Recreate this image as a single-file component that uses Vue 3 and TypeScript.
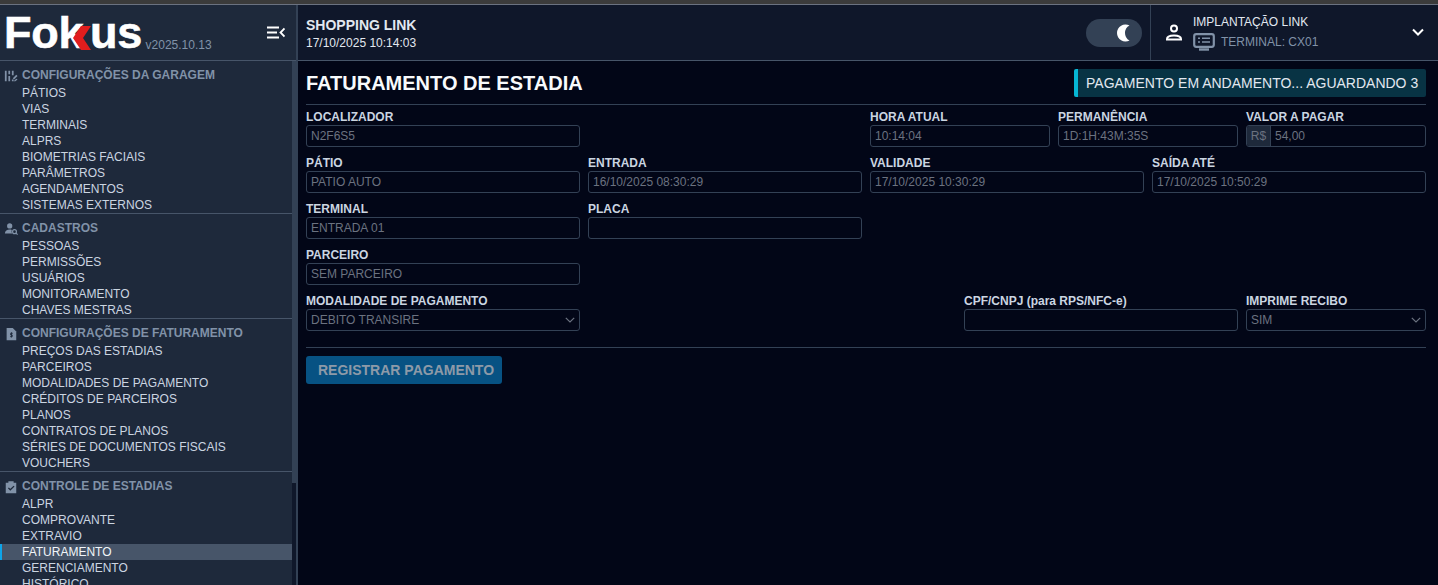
<script setup lang="ts">
const groups = [
  { title: 'CONFIGURAÇÕES DA GARAGEM', icon: 'garage', items: ['PÁTIOS', 'VIAS', 'TERMINAIS', 'ALPRS', 'BIOMETRIAS FACIAIS', 'PARÂMETROS', 'AGENDAMENTOS', 'SISTEMAS EXTERNOS'] },
  { title: 'CADASTROS', icon: 'people', items: ['PESSOAS', 'PERMISSÕES', 'USUÁRIOS', 'MONITORAMENTO', 'CHAVES MESTRAS'] },
  { title: 'CONFIGURAÇÕES DE FATURAMENTO', icon: 'bill', items: ['PREÇOS DAS ESTADIAS', 'PARCEIROS', 'MODALIDADES DE PAGAMENTO', 'CRÉDITOS DE PARCEIROS', 'PLANOS', 'CONTRATOS DE PLANOS', 'SÉRIES DE DOCUMENTOS FISCAIS', 'VOUCHERS'] },
  { title: 'CONTROLE DE ESTADIAS', icon: 'check', items: ['ALPR', 'COMPROVANTE', 'EXTRAVIO', 'FATURAMENTO', 'GERENCIAMENTO', 'HISTÓRICO'] },
]
</script>

<template>
  <div class="page">
    <div class="strip"></div>
    <div class="shell">
      <aside class="sidebar">
        <div class="brand">
          <div class="logo"><span>Fok</span><svg class="chev" viewBox="0 0 22 24" width="22" height="24"><path d="M10 0h10L12 12l8 12H10L2 12z" fill="#e11d1d" /></svg><span>us</span></div>
          <span class="version">v2025.10.13</span>
          <svg class="burger" viewBox="0 0 18 13" width="18" height="13" fill="none" stroke="#fff" stroke-width="2"><path d="M0 1.500h12M0 6.500h10M0 11.500h12" /><path d="M17.500 2.500 13.500 6.500l4 4" stroke-width="1.800" /></svg>
        </div>
        <div class="nav-wrap">
          <nav class="nav">
            <section v-for="g in groups" :key="g.title" class="group">
              <h3 class="group-title">
                <svg class="gicon" viewBox="0 0 16 16" width="14" height="14" fill="#8192a8">
                  <template v-if="g.icon === 'garage'">
                    <path d="M1 2h2v12H1zM5 2h2v4H5zM5 8h2v6H5zM9 2h2v5H9zM9 12h2v2H9z" /><path d="M10 10.500l4-4 1.500 1.500-4 4zM14 11l1.500 1-2.500 2h-2z" />
                  </template>
                  <template v-else-if="g.icon === 'people'">
                    <circle cx="6.500" cy="4.500" r="3" /><path d="M1 13c0-3 2.500-4.500 5.500-4.500 1 0 1.800.2 2.500.5-.6 1.200-.4 2.800.5 4z" /><circle cx="12" cy="11" r="2.200" fill="none" stroke="#8192a8" stroke-width="1.400" /><path d="M13.500 12.500 15.500 14.500" stroke="#8192a8" stroke-width="1.400" />
                  </template>
                  <template v-else-if="g.icon === 'bill'">
                    <path d="M3 1h7l4 4v10H3z" /><path d="M8.500 6v6M10 7.200H7.600v1.900h1.800V11H7" stroke="#1e293b" stroke-width="1" fill="none" />
                  </template>
                  <template v-else>
                    <path d="M2 3h3V1.500h6V3h3v12H2z" /><path d="M5 9l2.200 2.200L11.500 7" stroke="#1e293b" stroke-width="1.500" fill="none" />
                  </template>
                </svg>
                {{ g.title }}
              </h3>
              <a v-for="i in g.items" :key="i" class="item" :class="{ active: i === 'FATURAMENTO' }">{{ i }}</a>
            </section>
          </nav>
          <div class="scroll-track"><div class="scroll-thumb"></div></div>
        </div>
      </aside>

      <div class="right">
        <header class="topbar">
          <div class="place">
            <strong>SHOPPING LINK</strong>
            <span>17/10/2025 10:14:03</span>
          </div>
          <div class="toggle">
            <svg viewBox="0 0 16 18" width="16" height="18"><path d="M13.500 1.500A8.500 8.500 0 1 0 13.500 16.500 8.500 8.500 0 0 1 13.500 1.500Z" fill="#fff" /></svg>
          </div>
          <div class="account">
            <svg class="person" viewBox="0 0 18 17" width="18" height="17" fill="none" stroke="#fff" stroke-width="2"><circle cx="9" cy="4.500" r="3" /><path d="M2 15.500v-.5c0-2.500 3.500-3.500 7-3.500s7 1 7 3.500v.5z" /></svg>
            <div class="acc-text">
              <span class="acc-name">IMPLANTAÇÃO LINK</span>
              <span class="acc-term">
                <svg viewBox="0 0 22 18" width="22" height="18" fill="none" stroke="#8192a8" stroke-width="2.200"><rect x="1.200" y="1.200" width="19.600" height="12.600" rx="2" /><path d="M5 5.200h2M9 5.200h8M5 9h2M9 9h8" stroke-width="1.600" /><path d="M6 16.500h10" stroke-width="2.400" /></svg>
                TERMINAL: CX01
              </span>
            </div>
            <svg class="acc-chev" viewBox="0 0 14 9" width="14" height="9" fill="none" stroke="#fff" stroke-width="2"><path d="M2 1.500 7 6.500l5-5" /></svg>
          </div>
        </header>

        <main class="content">
          <div class="title-row">
            <h1>FATURAMENTO DE ESTADIA</h1>
            <div class="alert">PAGAMENTO EM ANDAMENTO... AGUARDANDO 3</div>
          </div>
          <form class="form" @submit.prevent>
            <div class="grid">
              <label class="field"><span>LOCALIZADOR</span><input readonly value="N2F6S5" /></label>
              <div></div>
              <div class="triple">
                <label class="field"><span>HORA ATUAL</span><input readonly value="10:14:04" /></label>
                <label class="field"><span>PERMANÊNCIA</span><input readonly value="1D:1H:43M:35S" /></label>
                <label class="field"><span>VALOR A PAGAR</span>
                  <div class="money"><b>R$</b><input readonly value="54,00" /></div>
                </label>
              </div>

              <label class="field"><span>PÁTIO</span><input readonly value="PATIO AUTO" /></label>
              <label class="field"><span>ENTRADA</span><input readonly value="16/10/2025 08:30:29" /></label>
              <label class="field"><span>VALIDADE</span><input readonly value="17/10/2025 10:30:29" /></label>
              <label class="field"><span>SAÍDA ATÉ</span><input readonly value="17/10/2025 10:50:29" /></label>

              <label class="field"><span>TERMINAL</span><input readonly value="ENTRADA 01" /></label>
              <label class="field"><span>PLACA</span><input readonly value="" /></label>
              <div class="wide"></div>

              <label class="field"><span>PARCEIRO</span><input readonly value="SEM PARCEIRO" /></label>
              <div class="rest"></div>

              <label class="field"><span>MODALIDADE DE PAGAMENTO</span>
                <div class="select"><span class="sel-val">DEBITO TRANSIRE</span><svg viewBox="0 0 10 6" width="10" height="6" fill="none" stroke="#6b7280" stroke-width="1.200"><path d="M.8.800 5 5l4.200-4.200" /></svg></div>
              </label>
              <div class="pay-right">
                <label class="field cpf"><span>CPF/CNPJ (para RPS/NFC-e)</span><input readonly value="" /></label>
                <label class="field rec"><span>IMPRIME RECIBO</span>
                  <div class="select"><span class="sel-val">SIM</span><svg viewBox="0 0 10 6" width="10" height="6" fill="none" stroke="#6b7280" stroke-width="1.200"><path d="M.8.800 5 5l4.200-4.200" /></svg></div>
                </label>
              </div>
            </div>
            <hr class="sep" />
            <button class="submit" type="button" disabled>REGISTRAR PAGAMENTO</button>
          </form>
        </main>
      </div>
    </div>
  </div>
</template>

<style scoped>
.page {
  height: 585px;
  display: flex;
  flex-direction: column;
  overflow: hidden;
  font-family: "Liberation Sans", Arial, sans-serif;
  background: #020617;
  color: #e2e8f0;
}
.strip {
  height: 4px;
  flex: none;
  background: #3b3b3b;
  border-bottom: 1px solid #6b7280;
}
.shell { flex: 1; display: flex; min-height: 0; }
.sidebar {
  width: 296px;
  flex: none;
  display: flex;
  flex-direction: column;
  background: #1e293b;
  border-right: 2px solid #334155;
  min-height: 0;
}
.brand {
  height: 56px;
  flex: none;
  box-sizing: border-box;
  border-bottom: 1px solid #475569;
  display: flex;
  align-items: flex-start;
  position: relative;
  padding-left: 4px;
}
.logo {
  display: flex;
  align-items: flex-end;
  height: 36px;
  margin-top: 10px;
  color: #fff;
  font-weight: 700;
  font-size: 45px;
  line-height: 36px;
  letter-spacing: -0.3px;
  -webkit-text-stroke: 0.6px #fff;
}
.chev { margin: 0 -3px 1px -12px; flex: none; position: relative; }
.version { margin: 34px 0 0 3.5px; font-size: 12px; line-height: 12px; color: #8192a8; }
.burger { position: absolute; right: 11px; top: 21px; }
.nav-wrap { flex: 1; min-height: 0; position: relative; }
.nav { height: 100%; overflow: hidden; margin-right: 4px; }
.scroll-track { position: absolute; top: 0; right: 0; bottom: 0; width: 4px; background: #0f172a; }
.scroll-thumb { height: 422px; background: #334155; }
.group { padding-top: 1px; border-bottom: 1px solid #475569; }
.group:last-child { border-bottom: 0; }
.group-title {
  margin: 0;
  height: 23px;
  padding: 6px 0 0 22px;
  box-sizing: border-box;
  position: relative;
  font-size: 12px;
  line-height: 14px;
  font-weight: 700;
  color: #8192a8;
}
.gicon { position: absolute; left: 4px; top: 7px; }
.item {
  display: block;
  height: 16px;
  line-height: 16px;
  font-size: 12px;
  padding-left: 22px;
  color: #cbd5e1;
}
.item.active {
  background: #475569;
  color: #f1f5f9;
  box-shadow: inset 2px 0 0 #0ea5e9;
}
.right { flex: 1; min-width: 0; display: flex; flex-direction: column; }
.topbar {
  height: 56px;
  flex: none;
  box-sizing: border-box;
  background: #0f172a;
  border-bottom: 1px solid #475569;
  display: flex;
  align-items: center;
}
.place { flex: 1; padding-left: 8px; display: flex; flex-direction: column; }
.place strong { font-size: 14px; line-height: 18px; margin: 1px 0; }
.place span { font-size: 12px; line-height: 16px; }
.toggle {
  width: 56px;
  height: 28px;
  border-radius: 14px;
  background: #334155;
  margin-right: 8px;
  display: flex;
  align-items: center;
  justify-content: flex-end;
  padding-right: 10px;
  box-sizing: border-box;
}
.account {
  width: 288px;
  height: 100%;
  box-sizing: border-box;
  border-left: 1px solid #334155;
  display: flex;
  align-items: center;
  padding-left: 14px;
  position: relative;
}
.person { flex: none; margin-right: 10px; }
.acc-text { display: flex; flex-direction: column; margin-top: 2px; }
.acc-name { font-size: 12px; line-height: 14px; color: #e2e8f0; }
.acc-term { font-size: 12px; display: flex; align-items: center; gap: 6px; color: #8192a8; height: 20px; margin-top: 3px; }
.acc-chev { position: absolute; right: 13px; top: 23px; }
.content { flex: 1; padding: 0 12px 0 8px; }
.title-row {
  height: 44px;
  box-sizing: border-box;
  border-bottom: 1px solid #334155;
  display: flex;
  align-items: flex-start;
  justify-content: space-between;
  padding-top: 8px;
}
h1 { margin: 0; font-size: 20px; line-height: 28px; color: #f8fafc; font-weight: 700; }
.alert {
  height: 28px;
  box-sizing: border-box;
  width: 352px;
  background: #083344;
  border-left: 4px solid #06b6d4;
  border-radius: 2px;
  padding-left: 8px;
  font-size: 14px;
  line-height: 28px;
  color: #e2e8f0;
  white-space: nowrap;
}
.form { padding-top: 4px; }
.grid { display: grid; grid-template-columns: repeat(4, 274px); column-gap: 8px; row-gap: 8px; }
.triple { grid-column: 3 / 5; display: grid; grid-template-columns: repeat(3, 180px); column-gap: 8px; }
.wide { grid-column: 3 / 5; }
.rest { grid-column: 2 / 5; }
.pay-right { grid-column: 2 / 5; display: flex; justify-content: flex-end; gap: 8px; }
.cpf { width: 274px; }
.rec { width: 180px; }
.field { display: flex; flex-direction: column; min-width: 0; }
.field > span {
  height: 16px;
  line-height: 16px;
  font-size: 12px;
  font-weight: 700;
  color: #cbd5e1;
}
input, .select, .money {
  height: 22px;
  box-sizing: border-box;
  width: 100%;
  background: transparent;
  border: 1px solid #334155;
  border-radius: 3px;
  padding: 0 4px;
  font: 12px "Liberation Sans", Arial, sans-serif;
  color: #6b7280;
  outline: none;
}
.select { display: flex; align-items: center; justify-content: space-between; padding-right: 4px; }
.sel-val { font-size: 12px; color: #6b7280; }
.money { display: flex; padding: 0; overflow: hidden; }
.money b {
  flex: none;
  width: 23px;
  background: #1e293b;
  border-right: 1px solid #334155;
  font-weight: 400;
  color: #6b7280;
  line-height: 20px;
  text-align: center;
}
.money input { border: 0; flex: 1; height: 20px; min-width: 0; }
.sep { border: 0; border-top: 1px solid #334155; margin: 16px 0 8px; }
.submit {
  width: 196px;
  height: 28px;
  border: 0;
  border-radius: 3px;
  background: #075283;
  color: #8d9aa8;
  font: 700 14px "Liberation Sans", Arial, sans-serif;
  padding: 0 0 0 12px;
  text-align: left;
}
</style>
